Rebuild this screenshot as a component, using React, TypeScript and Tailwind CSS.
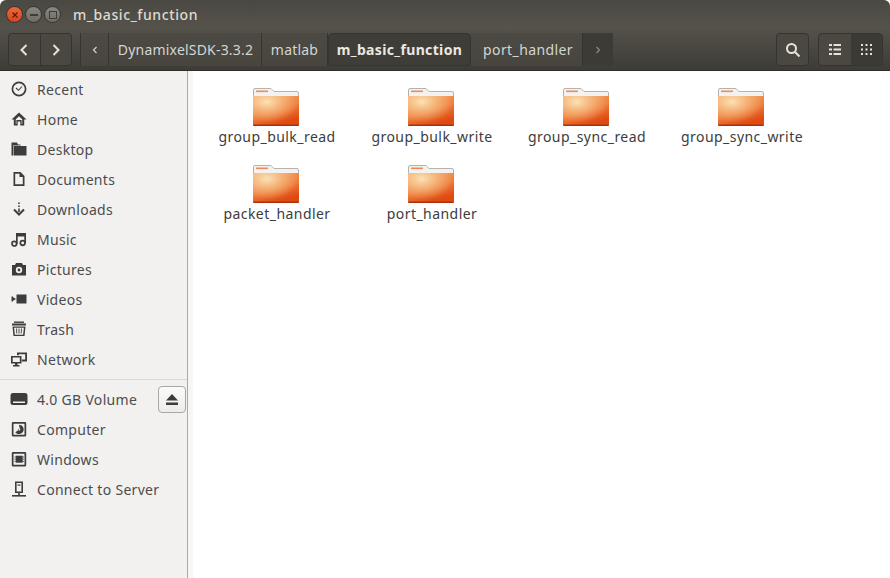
import type { ReactNode } from 'react'

const base = "font-['Noto_Sans',sans-serif]"

function Icon({ children }: { children: ReactNode }) {
  return (
    <svg width="18" height="18" viewBox="0 0 18 18" fill="#3c3c3c" className="mr-[-1px] ml-[-1px] shrink-0">
      {children}
    </svg>
  )
}

const icons: Record<string, ReactNode> = {
  Recent: (
    <>
      <circle cx="9" cy="9" r="6.600" fill="none" stroke="#3c3c3c" strokeWidth="1.700" />
      <path d="M6 8 8.500 10.300 12 6.500" fill="none" stroke="#3c3c3c" strokeWidth="1.100" />
    </>
  ),
  Home: <path d="M9 2.500 1.500 9.500h2.300v6h3.900v-4h2.600v4h3.900v-6h2.300L9 2.500zM5.800 9.300 9 6.200l3.200 3.100v4.700h-.6v-4H6.400v4h-.6V9.300z" fillRule="evenodd" />,
  Desktop: (
    <>
      <path d="M1.500 2.500h5.500l1 2h2.500v1H3v10H1.500V2.500z" />
      <rect x="3.500" y="6" width="13" height="9.500" />
    </>
  ),
  Documents: <path d="M3.500 2h7L14.500 6v10h-11V2zm1.700 1.700v10.600h7.600V7H9.500V3.700H5.200z" fillRule="evenodd" />,
  Downloads: (
    <>
      <path d="M4 9.500 9 14.500l5-5" fill="none" stroke="#3c3c3c" strokeWidth="2" />
      <path d="M8.200 2.500h1.600v1.600H8.200zM8.200 5.500h1.600v1.600H8.200zM8.200 8.500h1.600v3.500H8.200z" />
    </>
  ),
  Music: (
    <>
      <path d="M6 3h10v10h-1.700V6.500H7.700V14H6V3z" />
      <circle cx="4.300" cy="13.700" r="2.300" fill="none" stroke="#3c3c3c" strokeWidth="1.700" />
      <circle cx="12.700" cy="13" r="2.300" fill="none" stroke="#3c3c3c" strokeWidth="1.700" />
    </>
  ),
  Pictures: (
    <path d="M6 3h6l1 2h3v10.500H2V5h3L6 3zM9 6.800a3.200 3.200 0 1 0 0 6.400 3.200 3.200 0 0 0 0-6.400zm0 1.800a1.400 1.400 0 1 1 0 2.800 1.400 1.400 0 0 1 0-2.800z" fillRule="evenodd" />
  ),
  Videos: (
    <>
      <rect x="6.500" y="4.500" width="10" height="9" />
      <path d="M2 6.500v5l4-2.500z" />
      <rect x="1.500" y="6.500" width="1.300" height="5" />
    </>
  ),
  Trash: (
    <>
      <rect x="4" y="1.500" width="10" height="1.400" />
      <rect x="2" y="3.500" width="14" height="2" />
      <path d="M2.500 6.500h13l-1 9.500h-11l-1-9.500zm1.600 1.300.8 6.900h8.200l.8-6.900H4.100z" fillRule="evenodd" />
      <path d="M6.500 8.500l.3 5M9 8.500v5M11.500 8.500l-.3 5" stroke="#3c3c3c" strokeWidth="0.900" fill="none" />
    </>
  ),
  Network: (
    <>
      <path d="M7 2.500h10v9h-5.200V9.500h3.400V4.300H8.800v1H7v-2.800z" />
      <path d="M1 6h10.500v7.500H7.500V15h2v1.500H3V15h2v-1.500H1V6zm1.700 1.600v4.300h7.100V7.600H2.700z" fillRule="evenodd" />
    </>
  ),
  Volume: (
    <path d="M3 3h12a2.500 2.500 0 0 1 2.500 2.500v7A2.500 2.500 0 0 1 15 15H3a2.500 2.500 0 0 1-2.500-2.500v-7A2.500 2.500 0 0 1 3 3zM3 11.500V13h12v-1.500H3z" fillRule="evenodd" />
  ),
  Computer: (
    <>
      <path d="M3 2h12a1.200 1.200 0 0 1 1.200 1.200v12A1.200 1.200 0 0 1 15 16.400H3a1.200 1.200 0 0 1-1.200-1.200V3.200A1.200 1.200 0 0 1 3 2zm.5 1.700v11h11v-11h-11z" fillRule="evenodd" />
      <path d="M9 4.700a4.700 4.700 0 1 1-3.800 7.500L9 9.700l-.5-1a1 1 0 1 0 1.200-.2L9 4.700z" />
    </>
  ),
  Windows: (
    <>
      <path d="M3 2h12a1.200 1.200 0 0 1 1.200 1.200v12A1.200 1.200 0 0 1 15 16.400H3a1.200 1.200 0 0 1-1.200-1.200V3.200A1.200 1.200 0 0 1 3 2zm.5 1.700v11h11v-11h-11z" fillRule="evenodd" />
      <rect x="5.700" y="5.700" width="7" height="7" />
      <path d="M4.500 7h1.200M4.500 9.200h1.200M4.500 11.400h1.200M12.700 7h1.200M12.700 9.200h1.200M12.700 11.400h1.200" stroke="#3c3c3c" strokeWidth="0.900" />
    </>
  ),
  Server: (
    <>
      <path d="M5 1.500h8v11.500H5V1.500zm1.600 1.600v8.300h4.800V3.100H6.600z" fillRule="evenodd" />
      <rect x="7.500" y="4.500" width="3" height="1.200" />
      <rect x="8.200" y="13" width="1.600" height="2" />
      <rect x="2" y="15" width="14" height="1.600" />
    </>
  ),
}

function Place({ icon, label }: { icon: string; label: string }) {
  return (
    <div className="flex h-[30px] items-center pl-[11px]">
      <Icon>{icons[icon]}</Icon>
      <span className="ml-[10px] text-[14px] tracking-[0.3px] text-[#4c4c4c]">{label}</span>
    </div>
  )
}

function Folder({ name }: { name: string }) {
  return (
    <div className="flex h-[77px] flex-col items-center">
      <svg width="48" height="38" viewBox="0 0 48 38">
        <defs>
          <linearGradient id="fbody" x1="0" y1="0" x2="0.5" y2="1">
            <stop offset="0" stopColor="#f2a468" />
            <stop offset="0.6" stopColor="#ee7c3a" />
            <stop offset="1" stopColor="#df4a12" />
          </linearGradient>
          <radialGradient id="fglow" cx="0.3" cy="0.2" r="0.7">
            <stop offset="0" stopColor="#fbe2b6" stopOpacity="1" />
            <stop offset="0.5" stopColor="#f9cf98" stopOpacity="0.55" />
            <stop offset="1" stopColor="#f9cf98" stopOpacity="0" />
          </radialGradient>
        </defs>
        <path d="M1.500 2a1.500 1.500 0 0 1 1.500-1.500h16l3 3h23a1.500 1.500 0 0 1 1.500 1.500v6h-45V2z" fill="#f3f2f0" stroke="#b5b3ae" />
        <rect x="4" y="2.500" width="12" height="1.600" fill="#ee8a55" />
        <path d="M1 8h46v28a1.500 1.500 0 0 1-1.500 1.500h-43A1.500 1.500 0 0 1 1 36V8z" fill="url(#fbody)" />
        <path d="M1 8h46v28a1.500 1.500 0 0 1-1.500 1.500h-43A1.500 1.500 0 0 1 1 36V8z" fill="url(#fglow)" />
        <path d="M1 36.500h46v.5a1 1 0 0 1-1 1H2a1 1 0 0 1-1-1z" fill="#a8320b" />
      </svg>
      <span className="mt-[1px] pl-[3px] text-[14px] leading-[20px] tracking-[0.45px] text-[#3c3c3c]">{name}</span>
    </div>
  )
}

function WinBtn({ color, children }: { color: string; children: ReactNode }) {
  return (
    <div className={`flex h-[17px] w-[17px] items-center justify-center rounded-full border border-[#35342f] ${color}`}>
      {children}
    </div>
  )
}

const segClass = 'flex h-full items-center justify-center border-r border-[#35342f] bg-gradient-to-b from-[#4d4a43] to-[#47453e] tracking-[0.2px] text-[#d3d6d4]'

export default function App() {
  return (
    <div className={`${base} h-[578px] w-[890px] overflow-hidden bg-white`}>
      <div className="flex h-full flex-col">
        {/* title bar */}
        <div className="flex h-[29px] items-center rounded-t-[6px] bg-gradient-to-b from-[#4a4842] to-[#55534b] pl-[6px]">
          <div className="flex gap-[2px]">
            <WinBtn color="bg-gradient-to-b from-[#f0683a] to-[#d9431b]">
              <svg width="8" height="8" viewBox="0 0 8 8"><path d="M1.500 1.500 6.500 6.500M6.500 1.500 1.500 6.500" stroke="#4a2012" strokeWidth="1.200" /></svg>
            </WinBtn>
            <WinBtn color="bg-gradient-to-b from-[#8a877f] to-[#6f6c64]">
              <div className="h-[2px] w-[8px] bg-[#3f3d37]" />
            </WinBtn>
            <WinBtn color="bg-gradient-to-b from-[#8a877f] to-[#6f6c64]">
              <div className="h-[8px] w-[8px] border border-[#3f3d37]" />
            </WinBtn>
          </div>
          <span className="ml-[12px] text-[14px] font-medium tracking-[0.6px] text-[#dfdbd2]">m_basic_function</span>
        </div>

        {/* toolbar */}
        <div className="flex h-[42px] items-center border-b border-[#2e2d29] bg-gradient-to-b from-[#53514a] to-[#3e3c36] pl-[8px] text-[14px]">
          <div className="flex h-[33px] w-[64px] overflow-hidden rounded-[4px] border border-[#35342f] bg-[#4a4841]">
            <div className="flex flex-1 items-center justify-center border-r border-[#35342f]">
              <svg width="10" height="14" viewBox="0 0 10 14"><path d="M7.500 2 2.500 7l5 5" fill="none" stroke="#e6e3dc" strokeWidth="2" /></svg>
            </div>
            <div className="flex flex-1 items-center justify-center">
              <svg width="10" height="14" viewBox="0 0 10 14"><path d="M2.500 2 7.500 7l-5 5" fill="none" stroke="#e6e3dc" strokeWidth="2" /></svg>
            </div>
          </div>

          <div className="ml-[8px] flex h-[33px] items-stretch">
            <div className={`${segClass} w-[29px] border-l`}>
              <svg width="6" height="8" viewBox="0 0 6 8"><path d="M4.500 1 1.500 4l3 3" fill="none" stroke="#d5d2ca" strokeWidth="1.200" /></svg>
            </div>
            <div className={`${segClass} w-[153px] pl-[1px]`}>DynamixelSDK-3.3.2</div>
            <div className={`${segClass} w-[66px]`}>matlab</div>
            <div className="flex w-[143px] items-center justify-center rounded-[4px] border border-[#35342f] bg-[#3f3d37] font-bold tracking-[0.35px] text-[#ebe8e1]">m_basic_function</div>
            <div className={`${segClass} w-[112px] pl-[3px]`}><span className="tracking-[0.4px]">port_handler</span></div>
            <div className="flex w-[30px] items-center justify-center bg-[#3d3b35]">
              <svg width="6" height="8" viewBox="0 0 6 8"><path d="M1.500 1 4.500 4l-3 3" fill="none" stroke="#8d8a82" strokeWidth="1.200" /></svg>
            </div>
          </div>

          <div className="ml-auto flex items-center pr-[7px]">
            <div className="flex h-[33px] w-[33px] items-center justify-center rounded-[4px] border border-[#35342f] bg-[#4a4841]">
              <svg width="16" height="16" viewBox="0 0 16 16">
                <circle cx="6.500" cy="6.500" r="4.500" fill="none" stroke="#e6e3dc" strokeWidth="2" />
                <path d="M10 10l4.500 4.500" stroke="#e6e3dc" strokeWidth="2" />
              </svg>
            </div>
            <div className="ml-[9px] flex h-[33px] w-[65px] overflow-hidden rounded-[4px] border border-[#35342f] bg-[#4a4841]">
              <div className="flex flex-1 items-center justify-center">
                <svg width="12" height="11" viewBox="0 0 12 11" fill="#e6e3dc">
                  <path d="M0 0h3v2H0zM4.500 0H12v2H4.500zM0 4.500h3v2H0zM4.500 4.500H12v2H4.500zM0 9h3v2H0zM4.500 9H12v2H4.500z" />
                </svg>
              </div>
              <div className="flex flex-1 items-center justify-center bg-[#3c3a34]">
                <svg width="11" height="11" viewBox="0 0 11 11" fill="#e6e3dc">
                  <path d="M0 0h2v2H0zM4.500 0h2v2h-2zM9 0h2v2H9zM0 4.500h2v2H0zM4.500 4.500h2v2h-2zM9 4.500h2v2H9zM0 9h2v2H0zM4.500 9h2v2h-2zM9 9h2v2H9z" />
                </svg>
              </div>
            </div>
          </div>
        </div>

        <div className="flex min-h-0 flex-1">
          {/* sidebar */}
          <div className="w-[188px] shrink-0 border-r border-[#aaa9a5] bg-[#f2f1f0] pt-[3px]">
            <Place icon="Recent" label="Recent" />
            <Place icon="Home" label="Home" />
            <Place icon="Desktop" label="Desktop" />
            <Place icon="Documents" label="Documents" />
            <Place icon="Downloads" label="Downloads" />
            <Place icon="Music" label="Music" />
            <Place icon="Pictures" label="Pictures" />
            <Place icon="Videos" label="Videos" />
            <Place icon="Trash" label="Trash" />
            <Place icon="Network" label="Network" />
            <div className="mt-[5px] mb-[4px] h-px bg-[#dcdad7]" />
            <div className="relative">
              <Place icon="Volume" label="4.0 GB Volume" />
              <div className="absolute right-[1px] top-[2px] flex h-[27px] w-[28px] items-center justify-center rounded-[4px] border border-[#a9a8a3] bg-gradient-to-b from-[#fbfbfa] to-[#ecebe9]">
                <svg width="12" height="11" viewBox="0 0 12 11" fill="#3c3c3c"><path d="M6 0l6 6.500H0zM0 8.500h12V11H0z" /></svg>
              </div>
            </div>
            <Place icon="Computer" label="Computer" />
            <Place icon="Windows" label="Windows" />
            <Place icon="Server" label="Connect to Server" />
          </div>
          <div className="w-[5px] shrink-0 bg-[#f6f6f5]" />

          {/* file grid */}
          <div className="grid flex-1 auto-rows-[77px] grid-cols-[repeat(4,155px)] content-start pl-[5px] pt-[17px]">
            <Folder name="group_bulk_read" />
            <Folder name="group_bulk_write" />
            <Folder name="group_sync_read" />
            <Folder name="group_sync_write" />
            <Folder name="packet_handler" />
            <Folder name="port_handler" />
          </div>
        </div>
      </div>
    </div>
  )
}
